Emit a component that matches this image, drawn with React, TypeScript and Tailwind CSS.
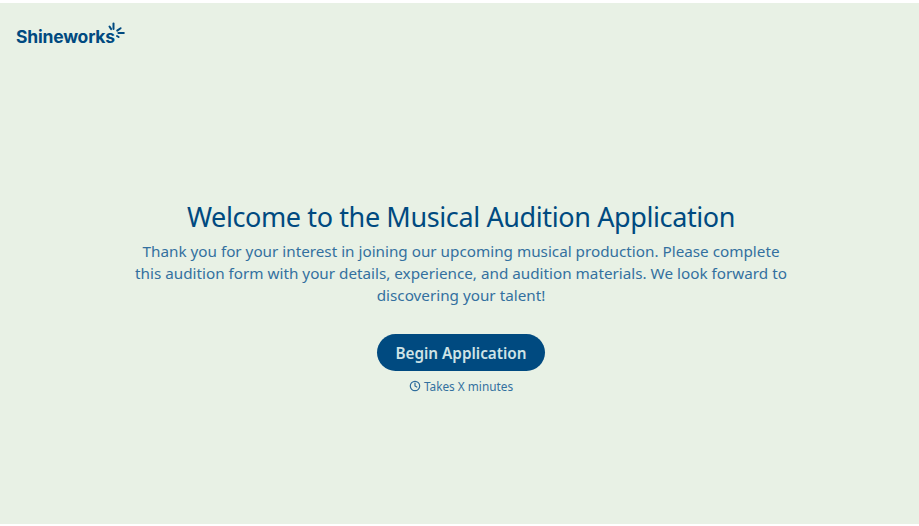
export default function App() {
  return (
    <div className="h-[526px] w-[919px] overflow-hidden bg-white pt-[3px] pb-[2px] font-['Noto_Sans',sans-serif]">
      <div className="flex h-full flex-col bg-[#e8f1e5]">
        <header className="flex h-[58px] items-start pl-[16px] pt-[21px]">
          <div className="flex items-start">
            <span className="font-['Inter',sans-serif] text-[17.5px] font-bold leading-[26px] tracking-[-0.2px] text-[#004a80]">Shineworks</span>
            <svg width="18" height="18" viewBox="0 0 18 18" className="-ml-[7px] -mt-[2px]" fill="none" stroke="#004a80" strokeLinecap="round" strokeWidth="2">
              <path d="M5.5 1.5v5.5" />
              <path d="M1.5 4.5l1.6 2.6" />
              <path d="M9.2 8.6l3.4-2.4" />
              <path d="M10.4 11h5.4" />
              <path d="M9 14l1.6 1" />
            </svg>
          </div>
        </header>
        <main className="flex flex-col items-center pl-[3px] pt-[137px]">
          <h1 className="whitespace-nowrap font-['Noto_Sans',sans-serif] text-[27px] font-normal leading-[38px] tracking-[-0.39px] text-[#004a80]">Welcome to the Musical Audition Application</h1>
          <p className="mt-[4px] w-[656px] text-center text-[15.25px] leading-[22px] text-[#33709f]">
            Thank you for your interest in joining our upcoming musical production. Please complete this audition form with your details, experience, and audition materials. We look forward to discovering your talent!
          </p>
          <button className="mt-[28px] flex h-[37px] w-[168px] items-center justify-center rounded-full bg-[#004a80] pt-[1px] text-[15.3px] font-semibold text-[#cfe3e6]">
            Begin Application
          </button>
          <div className="mt-[6px] flex items-center gap-[3px] text-[11.8px] leading-[18px] text-[#33709f]">
            <svg width="12" height="12" viewBox="0 0 12 12" className="-mt-[1px]" fill="none" stroke="#2f6d9c" strokeWidth="1.2" strokeLinecap="round" strokeLinejoin="round">
              <circle cx="6" cy="6" r="4.7" />
              <path d="M6 3.2V6l1.8 1" />
            </svg>
            <span>Takes X minutes</span>
          </div>
        </main>
      </div>
    </div>
  );
}
